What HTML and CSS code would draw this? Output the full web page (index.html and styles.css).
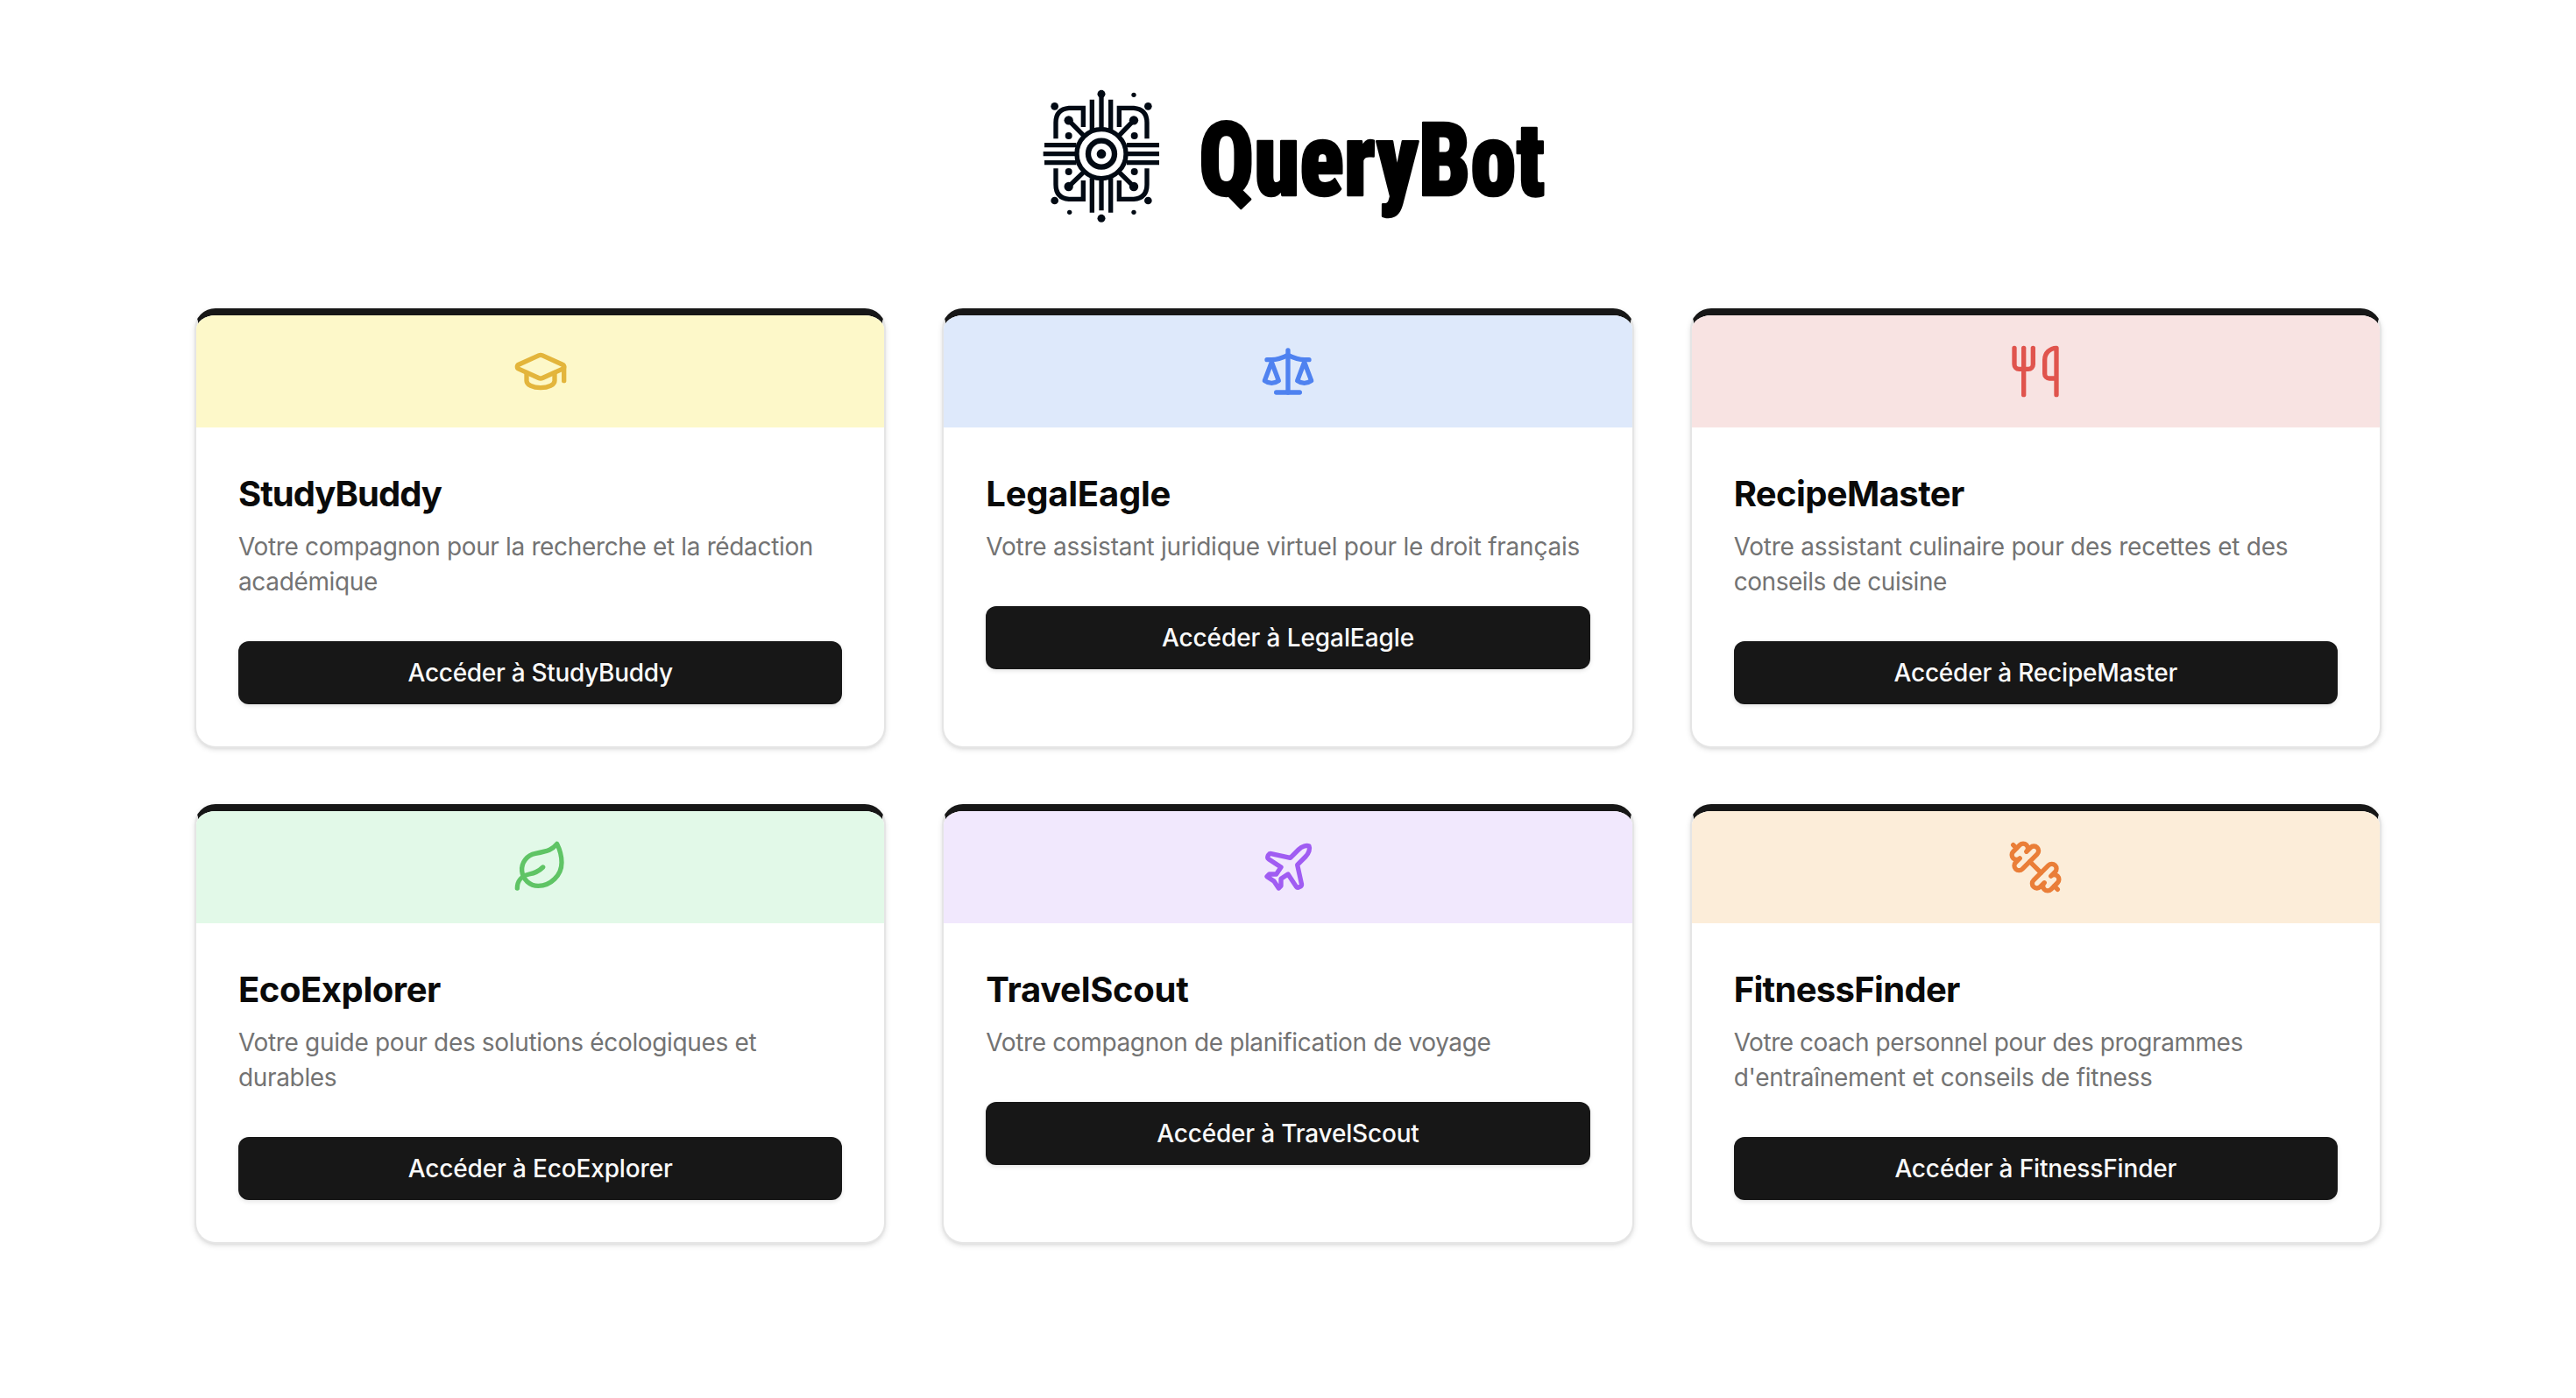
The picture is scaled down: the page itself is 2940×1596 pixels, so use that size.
FILE: index.html
```html
<!DOCTYPE html>
<html lang="fr">
<head>
<meta charset="utf-8">
<title>QueryBot</title>
<link rel="stylesheet" href="styles.css">
</head>
<body>
<header class="brand">
  <svg class="brand-mark" viewBox="0 0 480 525" aria-hidden="true">
    <!-- traces running out of the hub -->
    <g class="trace">
      <path d="M199 71V175M231 55V170M263 71V175M199 458V340M231 451V340M263 458V340"/>
      <path d="M36 227H145M32 257H145M36 287H145M429 227H318M429 257H318M429 287H318"/>
      <path d="M169 165V100H120Q75 104 75 150V205M292 165V100H342Q387 104 387 150V205M169 348V412H120Q75 408 75 362V307M292 348V412H342Q387 408 387 362V307"/>
      <path d="M119 142L170 194M342 142L292 194M119 369L170 320M342 369L292 320"/>
    </g>
    <g class="hub">
      <circle cx="231" cy="257" r="84"/>
      <circle class="hub-inner" cx="231" cy="257" r="45"/>
    </g>
    <g class="dots">
      <circle cx="231" cy="257" r="16"/>
      <circle cx="231" cy="52" r="13.5"/><circle cx="231" cy="478" r="13.5"/>
      <circle cx="119" cy="142" r="15.5"/><circle cx="342" cy="142" r="15.5"/><circle cx="119" cy="369" r="15.5"/><circle cx="342" cy="369" r="15.5"/>
      <circle cx="119" cy="195" r="12"/><circle cx="344" cy="195" r="12"/><circle cx="119" cy="318" r="12"/><circle cx="344" cy="318" r="12"/>
      <circle cx="71" cy="94" r="13"/><circle cx="391" cy="94" r="13"/><circle cx="71" cy="417" r="13"/><circle cx="391" cy="417" r="13"/>
      <circle cx="342" cy="55" r="8"/><circle cx="122" cy="457" r="8"/><circle cx="342" cy="457" r="8"/>
    </g>
  </svg>
  <svg class="brand-name" viewBox="0 0 420 175" role="img" aria-label="QueryBot">
    <text x="28" y="133" textLength="395" lengthAdjust="spacingAndGlyphs">QueryBot</text>
  </svg>
</header>

<main class="grid">
  <article class="card study">
    <div class="banner"><svg class="icon" viewBox="0 0 24 24"><path d="M21.42 10.922a1 1 0 0 0-.019-1.838L12.83 5.18a2 2 0 0 0-1.66 0L2.6 9.08a1 1 0 0 0 0 1.832l8.57 3.908a2 2 0 0 0 1.66 0z"/><path d="M22 10v6"/><path d="M6 12.5V16a6 3 0 0 0 12 0v-3.5"/></svg></div>
    <div class="body">
      <h2>StudyBuddy</h2>
      <p>Votre compagnon pour la recherche et la rédaction académique</p>
      <button class="btn">Accéder à StudyBuddy</button>
    </div>
  </article>

  <article class="card legal">
    <div class="banner"><svg class="icon" viewBox="0 0 24 24"><path d="m16 16 3-8 3 8c-.87.65-1.92 1-3 1s-2.13-.35-3-1Z"/><path d="m2 16 3-8 3 8c-.87.65-1.92 1-3 1s-2.13-.35-3-1Z"/><path d="M7 21h10"/><path d="M12 3v18"/><path d="M3 7h2c2 0 5-1 7-2 2 1 5 2 7 2h2"/></svg></div>
    <div class="body">
      <h2>LegalEagle</h2>
      <p>Votre assistant juridique virtuel pour le droit français</p>
      <button class="btn">Accéder à LegalEagle</button>
    </div>
  </article>

  <article class="card recipe">
    <div class="banner"><svg class="icon" viewBox="0 0 24 24"><path d="M3 2v7c0 1.1.9 2 2 2h4a2 2 0 0 0 2-2V2"/><path d="M7 2v20"/><path d="M21 15V2a5 5 0 0 0-5 5v6c0 1.1.9 2 2 2h3Zm0 0v7"/></svg></div>
    <div class="body">
      <h2>RecipeMaster</h2>
      <p>Votre assistant culinaire pour des recettes et des <span class="tail">conseils de cuisine</span></p>
      <button class="btn">Accéder à RecipeMaster</button>
    </div>
  </article>

  <article class="card eco">
    <div class="banner"><svg class="icon" viewBox="0 0 24 24"><path d="M11 20A7 7 0 0 1 9.8 6.1C15.5 5 17 4.48 19 2c1 2 2 4.18 2 8 0 5.5-4.78 10-10 10Z"/><path d="M2 21c0-3 1.85-5.36 5.08-6C9.5 14.52 12 13 13 12"/></svg></div>
    <div class="body">
      <h2>EcoExplorer</h2>
      <p>Votre guide pour des solutions écologiques et durables</p>
      <button class="btn">Accéder à EcoExplorer</button>
    </div>
  </article>

  <article class="card travel">
    <div class="banner"><svg class="icon" viewBox="0 0 24 24"><path d="M17.8 19.2 16 11l3.5-3.5C21 6 21.5 4 21 3c-1-.5-3 0-4.5 1.5L13 8 4.8 6.2c-.5-.1-.9.1-1.1.5l-.3.5c-.2.5-.1 1 .3 1.3L9 12l-2 3H4l-1 1 3 2 2 3 1-1v-3l3-2 3.5 5.3c.3.4.8.5 1.3.2l.5-.2c.4-.3.6-.7.5-1.2z"/></svg></div>
    <div class="body">
      <h2>TravelScout</h2>
      <p>Votre compagnon de planification de voyage</p>
      <button class="btn">Accéder à TravelScout</button>
    </div>
  </article>

  <article class="card fitness">
    <div class="banner"><svg class="icon" viewBox="0 0 24 24"><path d="M14.4 14.4 9.6 9.6"/><path d="M18.657 21.485a2 2 0 1 1-2.829-2.828l-1.767 1.768a2 2 0 1 1-2.829-2.829l6.364-6.364a2 2 0 1 1 2.829 2.829l-1.768 1.767a2 2 0 1 1 2.828 2.829z"/><path d="m21.5 21.5-1.4-1.4"/><path d="M3.9 3.9 2.5 2.5"/><path d="M6.404 12.768a2 2 0 1 1-2.829-2.829l1.768-1.767a2 2 0 1 1-2.828-2.829l2.828-2.828a2 2 0 1 1 2.829 2.828l1.767-1.768a2 2 0 1 1 2.829 2.829z"/></svg></div>
    <div class="body">
      <h2>FitnessFinder</h2>
      <p>Votre coach personnel pour des programmes <span class="tail">d'entraînement et conseils de fitness</span></p>
      <button class="btn">Accéder à FitnessFinder</button>
    </div>
  </article>
</main>
</body>
</html>
```
FILE: styles.css
```css
* { box-sizing: border-box; margin: 0; }

body {
  min-height: 1596px;
  padding: 90px 222px 0;
  background: #fff;
  color: #0a0a0a;
  font-family: Inter, "Liberation Sans", sans-serif;
}

/* Brand */
.brand { display: flex; justify-content: center; height: 262px; }
.brand-mark { width: 160px; height: 175px; }
.brand-name { width: 420px; height: 175px; overflow: visible; }
.brand-name text {
  font: 900 116px Roboto, sans-serif;
  font-stretch: 75%;
  fill: #000;
  stroke: #000;
  stroke-width: 2.5;
  stroke-linejoin: round;
}
.trace, .hub { fill: none; stroke: #020a14; stroke-width: 16; }
.hub-inner { stroke-width: 19; }
.dots { fill: #020a14; }

/* Cards */
.grid { display: grid; grid-template-columns: repeat(3, 1fr); gap: 64px; }
.card {
  height: 502px;
  overflow: hidden;
  border: 2px solid #e5e5e5;
  border-top: 8px solid #171717;
  border-radius: 24px;
  background: #fff;
  box-shadow: 0 2px 6px rgba(0, 0, 0, .1), 0 2px 4px -2px rgba(0, 0, 0, .1);
}
.banner { display: flex; justify-content: center; padding: 32px; background: var(--tint); }
.icon {
  width: 64px;
  height: 64px;
  fill: none;
  stroke: var(--accent);
  stroke-width: 2;
  stroke-linecap: round;
  stroke-linejoin: round;
}
.body { padding: 48px; }
h2 { margin-bottom: 12px; font-size: 40px; font-weight: 700; line-height: 56px; letter-spacing: var(--title-ls); }
p { color: #737373; font-size: 28px; line-height: 40px; letter-spacing: var(--text-ls); }
.tail { letter-spacing: var(--tail-ls); }
.btn {
  display: block;
  width: 100%;
  height: 72px;
  margin-top: 48px;
  padding: 0;
  border: 0;
  border-radius: 12px;
  background: #171717;
  color: #fafafa;
  font: 500 28px/40px Inter, "Liberation Sans", sans-serif;
  letter-spacing: var(--btn-ls);
  box-shadow: 0 2px 4px rgba(0, 0, 0, .05), 0 2px 6px rgba(0, 0, 0, .06);
}

.study   { --tint: #fdf8c9; --accent: #e3b53c; --title-ls: -1px;   --text-ls: -.35px; --btn-ls: -.3px; }
.legal   { --tint: #dee9fb; --accent: #4f82f0; --title-ls: -.25px; --text-ls: -.24px; --btn-ls: -.1px; }
.recipe  { --tint: #f8e3e2; --accent: #e0544d; --title-ls: -.6px;  --text-ls: -.24px; --tail-ls: -.45px; --btn-ls: -.2px; }
.eco     { --tint: #e2f9e8; --accent: #5fc465; --title-ls: -.45px; --text-ls: -.34px; --btn-ls: -.15px; }
.travel  { --tint: #f1e8fd; --accent: #a05cf2; --title-ls: -.3px;  --text-ls: -.37px; --btn-ls: -.18px; }
.fitness { --tint: #fcedd9; --accent: #ea7e38; --title-ls: -.7px;  --text-ls: -.45px; --tail-ls: -.26px; --btn-ls: -.15px; }
```
